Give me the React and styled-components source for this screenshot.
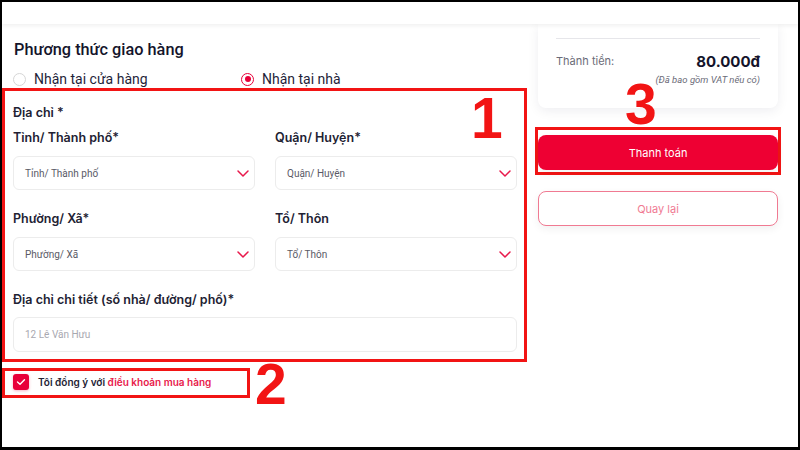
import React from "react";
import styled, { createGlobalStyle } from "styled-components";

const Global = createGlobalStyle`
  * { box-sizing: border-box; }
  html, body { margin: 0; padding: 0; background: #000; }
  body { font-family: "Inter", "Roboto", sans-serif; }
`;

const Frame = styled.div`
  position: relative;
  width: 800px;
  height: 450px;
  border: 2px solid #000;
  border-bottom-width: 3px;
  background: #fff;
  overflow: hidden;
  display: flex;
  flex-direction: column;
`;

const Header = styled.div`
  position: relative;
  z-index: 2;
  height: 22px;
  flex: none;
  background: #fff;
  box-shadow: 0 2px 4px rgba(0, 0, 0, 0.06);
`;

const Main = styled.div`
  display: flex;
  gap: 8px;
  flex: 1;
`;

const LeftCol = styled.div`
  width: 525px;
  display: flex;
  flex-direction: column;
`;

const Title = styled.h2`
  margin: 16px 0 0 12px;
  font-family: "Roboto", sans-serif;
  font-weight: 500;
  font-size: 16.3px;
  line-height: 20px;
  color: #14142b;
`;

const RadioRow = styled.div`
  display: flex;
  height: 18px;
  margin: 10px 0 0 11px;
  align-items: center;
`;

const RadioOption = styled.label`
  display: flex;
  align-items: center;
  gap: 8px;
  width: 228px;
  font-family: "Roboto", sans-serif;
  font-size: 14px;
  color: #1f1f3a;
`;

const RadioDot = styled.span`
  width: 13px;
  height: 13px;
  border-radius: 50%;
  border: ${(p) => (p.checked ? "1.5px solid #e8003a" : "1px solid #d6d6d6")};
  display: flex;
  align-items: center;
  justify-content: center;
  &::after {
    content: "";
    width: 6px;
    height: 6px;
    border-radius: 50%;
    background: ${(p) => (p.checked ? "#e8003a" : "transparent")};
  }
`;

const Annotated = styled.div`
  border: 3px solid #f21414;
`;

const AddressBox = styled(Annotated)`
  padding: 14px 7px 7px 8px;
  display: flex;
  flex-direction: column;
`;

const Label = styled.div`
  font-size: 12.5px;
  line-height: 16px;
  font-weight: 600;
  color: #222233;
  margin-top: ${(p) => p.$mt || 0}px;
`;

const Grid = styled.div`
  display: grid;
  grid-template-columns: 242px 242px;
  column-gap: 20px;
`;

const Field = styled.div`
  display: flex;
  flex-direction: column;
`;

const SelectBox = styled.div`
  margin-top: ${(p) => p.$mt || 10}px;
  height: ${(p) => p.$h || 34}px;
  border: 1px solid #ececec;
  border-radius: 6px;
  background: #fff;
  display: flex;
  align-items: center;
  justify-content: space-between;
  padding: 0 4px 0 11px;
  font-family: "Roboto", sans-serif;
  font-size: 10px;
  color: ${(p) => (p.$light ? "#a8a8b0" : "#5a5a66")};
`;

const Chevron = () => (
  <svg width="14" height="10" viewBox="0 0 14 10" fill="none">
    <path d="M2 3 L7 8 L12 3" stroke="#e8194b" strokeWidth="1.5" strokeLinecap="round" strokeLinejoin="round" />
  </svg>
);

const AgreeBox = styled(Annotated)`
  margin-top: 6px;
  width: 248px;
  height: 30px;
  display: flex;
  align-items: center;
  gap: 9px;
  padding: 0 0 0 8px;
`;

const CheckBox = styled.span`
  width: 16px;
  height: 16px;
  border-radius: 3px;
  background: #e8003a;
  display: flex;
  align-items: center;
  justify-content: center;
  box-shadow: 0 1px 3px rgba(232, 0, 58, 0.3);
  margin-top: -3px;
`;

const AgreeText = styled.span`
  font-size: 10px;
  font-weight: 600;
  color: #222233;
  margin-top: -3px;
`;

const Link = styled.span`
  color: #e8194b;
`;

const RightCol = styled.div`
  width: 246px;
  display: flex;
  flex-direction: column;
`;

const SummaryCard = styled.div`
  margin: 0 3px;
  height: 84px;
  background: #fff;
  border-radius: 0 0 8px 8px;
  box-shadow: 0 3px 12px rgba(20, 20, 60, 0.07);
  padding: 14px 18px 0;
`;

const Divider = styled.div`
  height: 1px;
  background: #e6e6ea;
`;

const TotalRow = styled.div`
  display: flex;
  justify-content: space-between;
  align-items: center;
  margin-top: 13px;
  height: 18px;
`;

const TotalLabel = styled.span`
  font-size: 11px;
  color: #6b6b78;
`;

const TotalValue = styled.span`
  font-size: 15px;
  font-weight: 700;
  color: #14142b;
`;

const VatNote = styled.div`
  text-align: right;
  font-family: "Roboto", sans-serif;
  font-size: 9.5px;
  font-style: italic;
  color: #6b6b78;
  margin-top: 4px;
`;

const PayBox = styled(Annotated)`
  margin-top: 19px;
  padding: 5px 0 2px;
`;

const Button = styled.button`
  display: flex;
  width: 100%;
  height: 35px;
  align-items: center;
  justify-content: center;
  border-radius: 8px;
  font-family: "Inter", sans-serif;
  font-size: 11px;
  cursor: pointer;
  background: ${(p) => (p.$primary ? "#ee0033" : "#fff")};
  color: ${(p) => (p.$primary ? "#fff" : "#f07a92")};
  border: ${(p) => (p.$primary ? "none" : "1.5px solid #f07a92")};
  box-shadow: 0 3px 8px rgba(0, 0, 0, 0.06);
`;

const BackWrap = styled.div`
  margin: 16px 3px 0;
`;

const Marker = styled.div`
  position: absolute;
  z-index: 5;
  font-family: "Liberation Sans", Arial, sans-serif;
  font-weight: 700;
  font-size: 57px;
  line-height: 57px;
  color: #f21414;
`;

export default function App() {
  return (
    <>
      <Global />
      <Frame>
        <Header />
        <Main>
          <LeftCol>
            <Title>Phương thức giao hàng</Title>
            <RadioRow>
              <RadioOption>
                <RadioDot />
                Nhận tại cửa hàng
              </RadioOption>
              <RadioOption>
                <RadioDot checked />
                Nhận tại nhà
              </RadioOption>
            </RadioRow>
            <AddressBox>
              <Label>Địa chỉ *</Label>
              <Grid>
                <Field>
                  <Label $mt={9}>Tỉnh/ Thành phố*</Label>
                  <SelectBox>
                    Tỉnh/ Thành phố
                    <Chevron />
                  </SelectBox>
                </Field>
                <Field>
                  <Label $mt={9}>Quận/ Huyện*</Label>
                  <SelectBox>
                    Quận/ Huyện
                    <Chevron />
                  </SelectBox>
                </Field>
                <Field>
                  <Label $mt={21}>Phường/ Xã*</Label>
                  <SelectBox>
                    Phường/ Xã
                    <Chevron />
                  </SelectBox>
                </Field>
                <Field>
                  <Label $mt={21}>Tổ/ Thôn</Label>
                  <SelectBox>
                    Tổ/ Thôn
                    <Chevron />
                  </SelectBox>
                </Field>
              </Grid>
              <Label $mt={21}>Địa chỉ chi tiết (số nhà/ đường/ phố)*</Label>
              <SelectBox $mt={9} $h={35} $light>
                12 Lê Văn Hưu
              </SelectBox>
            </AddressBox>
            <AgreeBox>
              <CheckBox>
                <svg width="10" height="8" viewBox="0 0 10 8" fill="none">
                  <path d="M1.5 4 L4 6.3 L8.5 1.7" stroke="#fff" strokeWidth="1.4" strokeLinecap="round" strokeLinejoin="round" />
                </svg>
              </CheckBox>
              <AgreeText>
                Tôi đồng ý với <Link>điều khoản mua hàng</Link>
              </AgreeText>
            </AgreeBox>
          </LeftCol>
          <RightCol>
            <SummaryCard>
              <Divider />
              <TotalRow>
                <TotalLabel>Thành tiền:</TotalLabel>
                <TotalValue>80.000đ</TotalValue>
              </TotalRow>
              <VatNote>(Đã bao gồm VAT nếu có)</VatNote>
            </SummaryCard>
            <PayBox>
              <Button $primary>Thanh toán</Button>
            </PayBox>
            <BackWrap>
              <Button>Quay lại</Button>
            </BackWrap>
          </RightCol>
        </Main>
        <Marker style={{ left: 469, top: 88 }}>1</Marker>
        <Marker style={{ left: 253, top: 354 }}>2</Marker>
        <Marker style={{ left: 623, top: 74 }}>3</Marker>
      </Frame>
    </>
  );
}
